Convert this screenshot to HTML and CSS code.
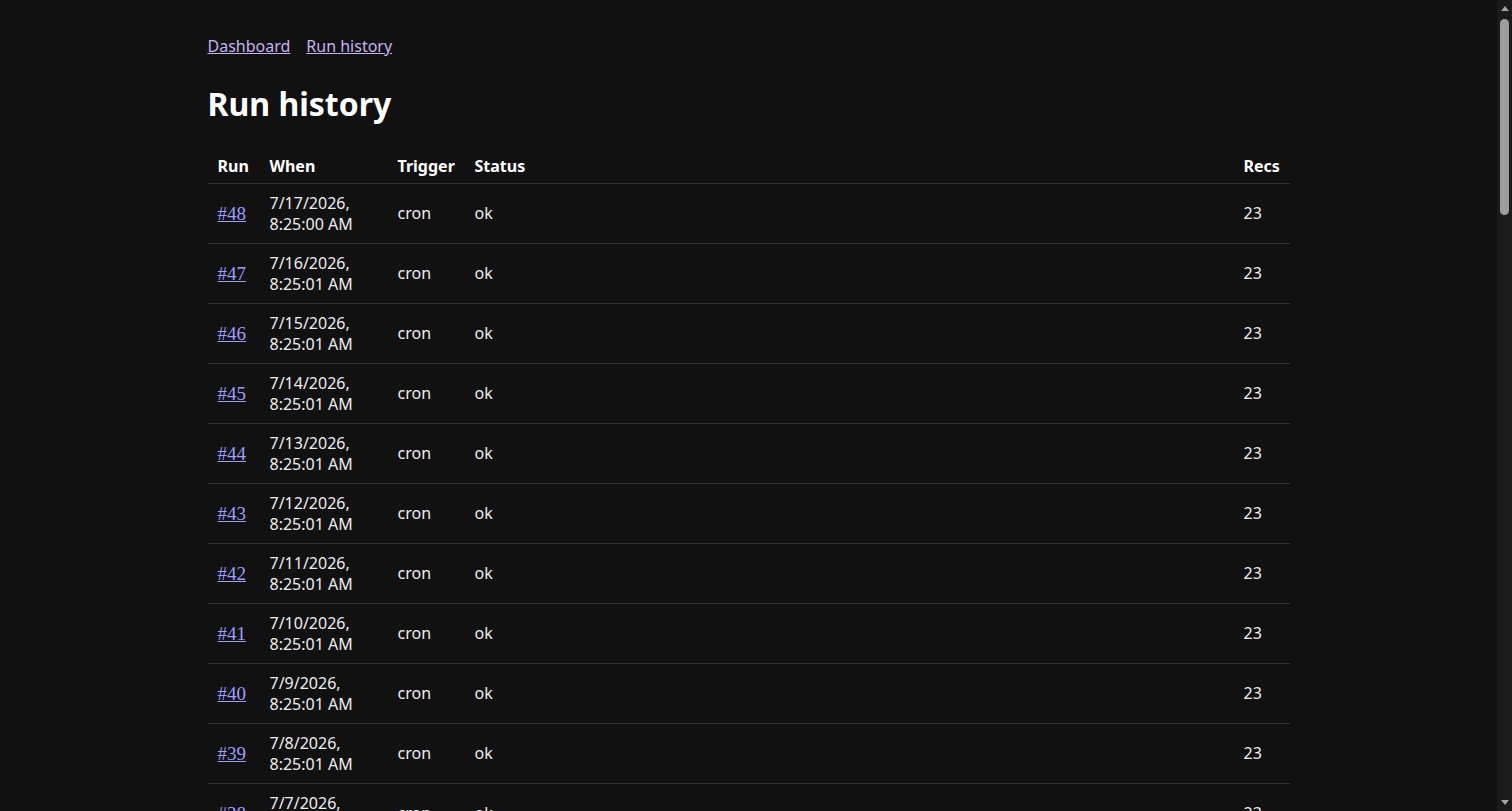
FILE: index.html
```html
<!DOCTYPE html>
<html lang="en">
<head>
    <meta charset="UTF-8">
    <meta name="viewport" content="width=device-width, initial-scale=1.0">
    <title>Run history</title>
    <link rel="stylesheet" href="styles.css">
</head>
<body>

    <div class="page">
        <nav class="nav">
            <a href="#">Dashboard</a>
            <a href="#">Run history</a>
        </nav>

        <h1>Run history</h1>

        <table class="runs">
            <thead>
                <tr>
                    <th class="col-run">Run</th>
                    <th class="col-when">When</th>
                    <th class="col-trigger">Trigger</th>
                    <th>Status</th>
                    <th class="col-recs">Recs</th>
                </tr>
            </thead>
            <tbody>
                <tr><td><a href="#">#48</a></td><td>7/17/2026, 8:25:00 AM</td><td>cron</td><td>ok</td><td>23</td></tr>
                <tr><td><a href="#">#47</a></td><td>7/16/2026, 8:25:01 AM</td><td>cron</td><td>ok</td><td>23</td></tr>
                <tr><td><a href="#">#46</a></td><td>7/15/2026, 8:25:01 AM</td><td>cron</td><td>ok</td><td>23</td></tr>
                <tr><td><a href="#">#45</a></td><td>7/14/2026, 8:25:01 AM</td><td>cron</td><td>ok</td><td>23</td></tr>
                <tr><td><a href="#">#44</a></td><td>7/13/2026, 8:25:01 AM</td><td>cron</td><td>ok</td><td>23</td></tr>
                <tr><td><a href="#">#43</a></td><td>7/12/2026, 8:25:01 AM</td><td>cron</td><td>ok</td><td>23</td></tr>
                <tr><td><a href="#">#42</a></td><td>7/11/2026, 8:25:01 AM</td><td>cron</td><td>ok</td><td>23</td></tr>
                <tr><td><a href="#">#41</a></td><td>7/10/2026, 8:25:01 AM</td><td>cron</td><td>ok</td><td>23</td></tr>
                <tr><td><a href="#">#40</a></td><td>7/9/2026, 8:25:01 AM</td><td>cron</td><td>ok</td><td>23</td></tr>
                <tr><td><a href="#">#39</a></td><td>7/8/2026, 8:25:01 AM</td><td>cron</td><td>ok</td><td>23</td></tr>
                <tr><td><a href="#">#38</a></td><td>7/7/2026, 8:25:01 AM</td><td>cron</td><td>ok</td><td>23</td></tr>
                <tr><td><a href="#">#37</a></td><td>7/6/2026, 8:25:01 AM</td><td>cron</td><td>ok</td><td>23</td></tr>
                <tr><td><a href="#">#36</a></td><td>7/5/2026, 8:25:01 AM</td><td>cron</td><td>ok</td><td>23</td></tr>
                <tr><td><a href="#">#35</a></td><td>7/4/2026, 8:25:01 AM</td><td>cron</td><td>ok</td><td>23</td></tr>
                <tr><td><a href="#">#34</a></td><td>7/3/2026, 8:25:01 AM</td><td>cron</td><td>ok</td><td>23</td></tr>
                <tr><td><a href="#">#33</a></td><td>7/2/2026, 8:25:01 AM</td><td>cron</td><td>ok</td><td>23</td></tr>
                <tr><td><a href="#">#32</a></td><td>7/1/2026, 8:25:01 AM</td><td>cron</td><td>ok</td><td>23</td></tr>
                <tr><td><a href="#">#31</a></td><td>6/30/2026, 8:25:01 AM</td><td>cron</td><td>ok</td><td>23</td></tr>
                <tr><td><a href="#">#30</a></td><td>6/29/2026, 8:25:01 AM</td><td>cron</td><td>ok</td><td>23</td></tr>
                <tr><td><a href="#">#29</a></td><td>6/28/2026, 8:25:01 AM</td><td>cron</td><td>ok</td><td>23</td></tr>
                <tr><td><a href="#">#28</a></td><td>6/27/2026, 8:25:01 AM</td><td>cron</td><td>ok</td><td>23</td></tr>
                <tr><td><a href="#">#27</a></td><td>6/26/2026, 8:25:01 AM</td><td>cron</td><td>ok</td><td>23</td></tr>
                <tr><td><a href="#">#26</a></td><td>6/25/2026, 8:25:01 AM</td><td>cron</td><td>ok</td><td>23</td></tr>
                <tr><td><a href="#">#25</a></td><td>6/24/2026, 8:25:01 AM</td><td>cron</td><td>ok</td><td>23</td></tr>
                <tr><td><a href="#">#24</a></td><td>6/23/2026, 8:25:01 AM</td><td>cron</td><td>ok</td><td>23</td></tr>
                <tr><td><a href="#">#23</a></td><td>6/22/2026, 8:25:01 AM</td><td>cron</td><td>ok</td><td>23</td></tr>
                <tr><td><a href="#">#22</a></td><td>6/21/2026, 8:25:01 AM</td><td>cron</td><td>ok</td><td>23</td></tr>
                <tr><td><a href="#">#21</a></td><td>6/20/2026, 8:25:01 AM</td><td>cron</td><td>ok</td><td>23</td></tr>
                <tr><td><a href="#">#20</a></td><td>6/19/2026, 8:25:01 AM</td><td>cron</td><td>ok</td><td>23</td></tr>
                <tr><td><a href="#">#19</a></td><td>6/18/2026, 8:25:01 AM</td><td>cron</td><td>ok</td><td>23</td></tr>
                <tr><td><a href="#">#18</a></td><td>6/17/2026, 8:25:01 AM</td><td>cron</td><td>ok</td><td>23</td></tr>
                <tr><td><a href="#">#17</a></td><td>6/16/2026, 8:25:01 AM</td><td>cron</td><td>ok</td><td>23</td></tr>
                <tr><td><a href="#">#16</a></td><td>6/15/2026, 8:25:01 AM</td><td>cron</td><td>ok</td><td>23</td></tr>
                <tr><td><a href="#">#15</a></td><td>6/14/2026, 8:25:01 AM</td><td>cron</td><td>ok</td><td>23</td></tr>
                <tr><td><a href="#">#14</a></td><td>6/13/2026, 8:25:01 AM</td><td>cron</td><td>ok</td><td>23</td></tr>
                <tr><td><a href="#">#13</a></td><td>6/12/2026, 8:25:01 AM</td><td>cron</td><td>ok</td><td>23</td></tr>
                <tr><td><a href="#">#12</a></td><td>6/11/2026, 8:25:01 AM</td><td>cron</td><td>ok</td><td>23</td></tr>
                <tr><td><a href="#">#11</a></td><td>6/10/2026, 8:25:01 AM</td><td>cron</td><td>ok</td><td>23</td></tr>
                <tr><td><a href="#">#10</a></td><td>6/9/2026, 8:25:01 AM</td><td>cron</td><td>ok</td><td>23</td></tr>
                <tr><td><a href="#">#9</a></td><td>6/8/2026, 8:25:01 AM</td><td>cron</td><td>ok</td><td>23</td></tr>
                <tr><td><a href="#">#8</a></td><td>6/7/2026, 8:25:01 AM</td><td>cron</td><td>ok</td><td>23</td></tr>
                <tr><td><a href="#">#7</a></td><td>6/6/2026, 8:25:01 AM</td><td>cron</td><td>ok</td><td>23</td></tr>
                <tr><td><a href="#">#6</a></td><td>6/5/2026, 8:25:01 AM</td><td>cron</td><td>ok</td><td>23</td></tr>
                <tr><td><a href="#">#5</a></td><td>6/4/2026, 8:25:01 AM</td><td>cron</td><td>ok</td><td>23</td></tr>
                <tr><td><a href="#">#4</a></td><td>6/3/2026, 8:25:01 AM</td><td>cron</td><td>ok</td><td>23</td></tr>
                <tr><td><a href="#">#3</a></td><td>6/2/2026, 8:25:01 AM</td><td>cron</td><td>ok</td><td>23</td></tr>
                <tr><td><a href="#">#2</a></td><td>6/1/2026, 8:25:01 AM</td><td>cron</td><td>ok</td><td>23</td></tr>
                <tr><td><a href="#">#1</a></td><td>5/31/2026, 8:25:01 AM</td><td>cron</td><td>ok</td><td>23</td></tr>
            </tbody>
        </table>
    </div>

    <div class="scrollbar">
        <div class="sb-arrow sb-up"></div>
        <div class="sb-track"><div class="sb-thumb"></div></div>
        <div class="sb-arrow sb-down"></div>
    </div>

</body>
</html>
```

FILE: styles.css
```css
html {
    color-scheme: dark;
}
body {
    margin: 0;
    padding-right: 15px;
    background-color: #111;
    color: #eee;
    font-family: "Noto Sans", "Open Sans", sans-serif;
    font-size: 16px;
}
.page {
    width: 1082px;
    margin: 0 auto;
    padding: 34px 0 40px;
}
.nav {
    display: flex;
    gap: 16px;
    line-height: 24px;
}
.nav a {
    color: #c6b3f0;
}
h1 {
    margin: 24px 0 23px;
    font-size: 32px;
    line-height: 44px;
    font-weight: 700;
    color: #fff;
}
.runs {
    width: 100%;
    border-collapse: collapse;
    table-layout: fixed;
}
.runs th,
.runs td {
    text-align: left;
    padding: 8px 10px;
    line-height: 21.5px;
    border-bottom: 1px solid #333;
}
.runs th {
    padding-top: 7px;
    padding-bottom: 5px;
    font-weight: 700;
    color: #fff;
}
.runs td {
    padding-top: 9px;
    padding-bottom: 7px;
}
.col-run {
    width: 32px;
}
.col-when {
    width: 108px;
}
.col-trigger {
    width: 57px;
}
.col-recs {
    width: 36px;
}
.runs td a {
    font-family: "Liberation Serif", serif;
    font-size: 19px;
    color: #9e9eff;
}

/* page scrollbar */
.scrollbar {
    position: fixed;
    top: 0;
    right: 0;
    bottom: 0;
    width: 15px;
    display: flex;
    flex-direction: column;
    background-color: #1a1a1a;
}
.sb-arrow {
    height: 17px;
    display: flex;
    align-items: center;
    justify-content: center;
}
.sb-up::before {
    content: "";
    border-left: 4px solid transparent;
    border-right: 4px solid transparent;
    border-bottom: 5px solid #a3a3a3;
}
.sb-down::before {
    content: "";
    border-left: 4px solid transparent;
    border-right: 4px solid transparent;
    border-top: 5px solid #a3a3a3;
}
.sb-track {
    flex: 1;
    padding: 2px 0 0 3px;
}
.sb-thumb {
    width: 9px;
    height: 196px;
    border-radius: 5px;
    background-color: #9d9d9d;
}
```
